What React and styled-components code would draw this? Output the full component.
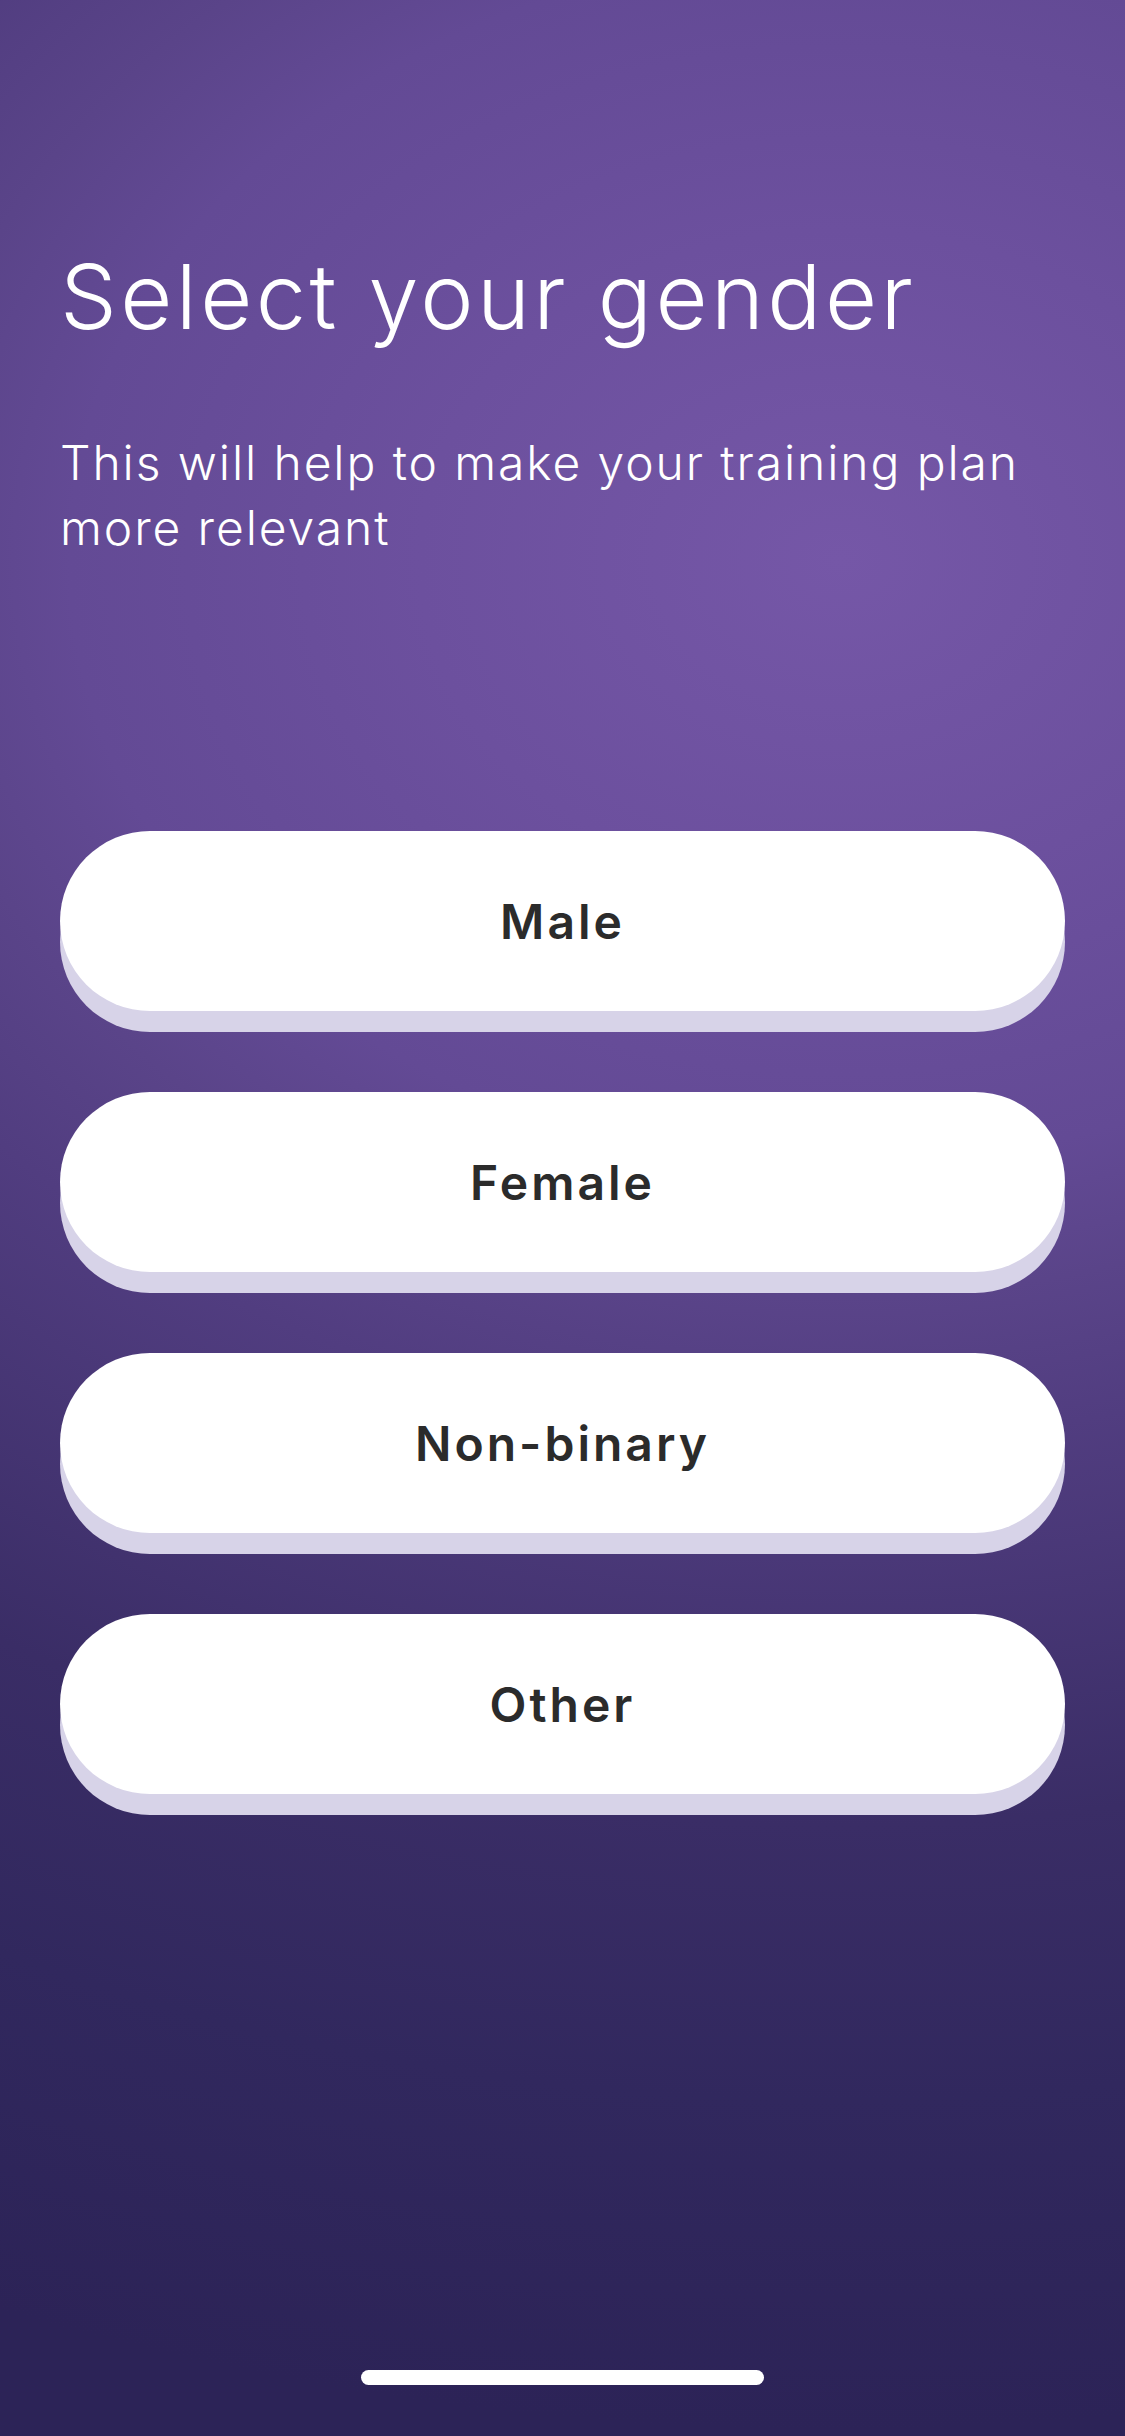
import styled, { createGlobalStyle } from 'styled-components';

const GlobalStyle = createGlobalStyle`
  html, body {
    margin: 0;
    padding: 0;
    background: #2c2357;
  }
  * {
    box-sizing: border-box;
  }
`

const options = ['Male', 'Female', 'Non-binary', 'Other']

const App = () => {
  return (
    <>
      <GlobalStyle />
      <Screen>
        <Header>
          <Title>Select your gender</Title>
          <Subtitle>This will help to make your training plan more relevant</Subtitle>
        </Header>
        <OptionList>
          {options.map((label) => (
            <OptionButton key={label}>{label}</OptionButton>
          ))}
        </OptionList>
        <HomeIndicator />
      </Screen>
    </>
  )
}

const Screen = styled.div`
  display: flex;
  flex-direction: column;
  width: 1125px;
  height: 2436px;
  padding: 0 60px;
  overflow: hidden;
  font-family: Inter, 'Noto Sans', sans-serif;
  background: radial-gradient(
    ellipse 1400px 1100px at 840px 560px,
    #7557a7 0%,
    #6c509e 30%,
    #634a95 55%,
    #5a4489 67%,
    #513d80 80%,
    #3a2d66 115%,
    #31285e 140%,
    #2c2357 170%
  );
`

const Header = styled.header`
  display: flex;
  flex-direction: column;
  padding-top: 243px;
`

const Title = styled.h1`
  margin: 0;
  font-size: 90px;
  line-height: 108px;
  font-weight: 300;
  color: #ffffff;
  letter-spacing: 3.4px;
`

const Subtitle = styled.p`
  margin: 79px 0 0;
  width: 1000px;
  font-size: 48px;
  line-height: 65px;
  font-weight: 300;
  color: #ffffff;
  letter-spacing: 1.9px;
`

const OptionList = styled.div`
  display: flex;
  flex-direction: column;
  gap: 81px;
  margin-top: 271px;
`

const OptionButton = styled.button`
  display: flex;
  align-items: center;
  justify-content: center;
  width: 100%;
  height: 180px;
  border: none;
  border-radius: 90px;
  background: #ffffff;
  box-shadow: 0 21px 0 #d7d3e8;
  color: #2b2b2b;
  font-family: Inter, 'Noto Sans', sans-serif;
  font-size: 48px;
  font-weight: 600;
  letter-spacing: 3px;
  cursor: pointer;
`

const HomeIndicator = styled.div`
  align-self: center;
  width: 403px;
  height: 15px;
  margin-top: auto;
  margin-bottom: 51px;
  border-radius: 8px;
  background: #ffffff;
`

export default App
